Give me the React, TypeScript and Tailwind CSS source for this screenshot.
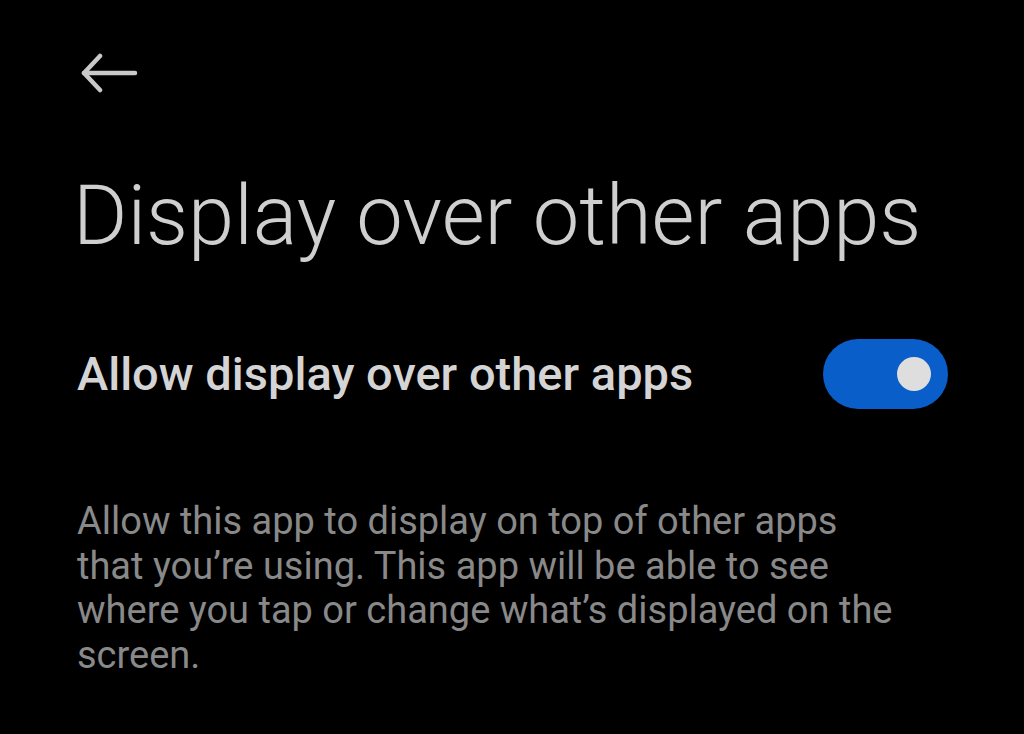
import { useState } from "react"

export default function App() {
  const [enabled, setEnabled] = useState(true)

  return (
    <div className="w-[1024px] h-[734px] bg-black overflow-hidden font-['Roboto',sans-serif]">
      <div className="pl-[77px] pr-[76px]">
        <button type="button" className="mt-[53px] ml-[4px] block text-[#c9c9c9]">
          <svg width="57" height="40" viewBox="0 0 57 40" fill="none" stroke="currentColor" strokeWidth="4.5" strokeLinecap="round" strokeLinejoin="round">
            <path d="M3 20H54" />
            <path d="M19 3L3 20L19 37" />
          </svg>
        </button>

        <h1 className="mt-[73px] -ml-[4px] text-[83px] leading-[100px] font-light text-[#cfcfcf]">
          Display over other apps
        </h1>

        <div className="mt-[73px] flex items-center justify-between">
          <span className="text-[47px] leading-[66px] font-medium text-[#d4d4d4]">Allow display over other apps</span>
          <button
            type="button"
            onClick={() => setEnabled(!enabled)}
            className={`w-[125px] h-[70px] rounded-full flex items-center px-[17px] ${enabled ? "bg-[#0a5ec9] justify-end" : "bg-[#444] justify-start"}`}
          >
            <span className="w-[34px] h-[34px] rounded-full bg-[#dedede]" />
          </button>
        </div>

        <p className="mt-[90px] text-[38px] leading-[44.5px] text-[#898989] max-w-[825px]">
          Allow this app to display on top of other apps that you’re using. This app will be able to see where you tap or change what’s displayed on the screen.
        </p>
      </div>
    </div>
  )
}
